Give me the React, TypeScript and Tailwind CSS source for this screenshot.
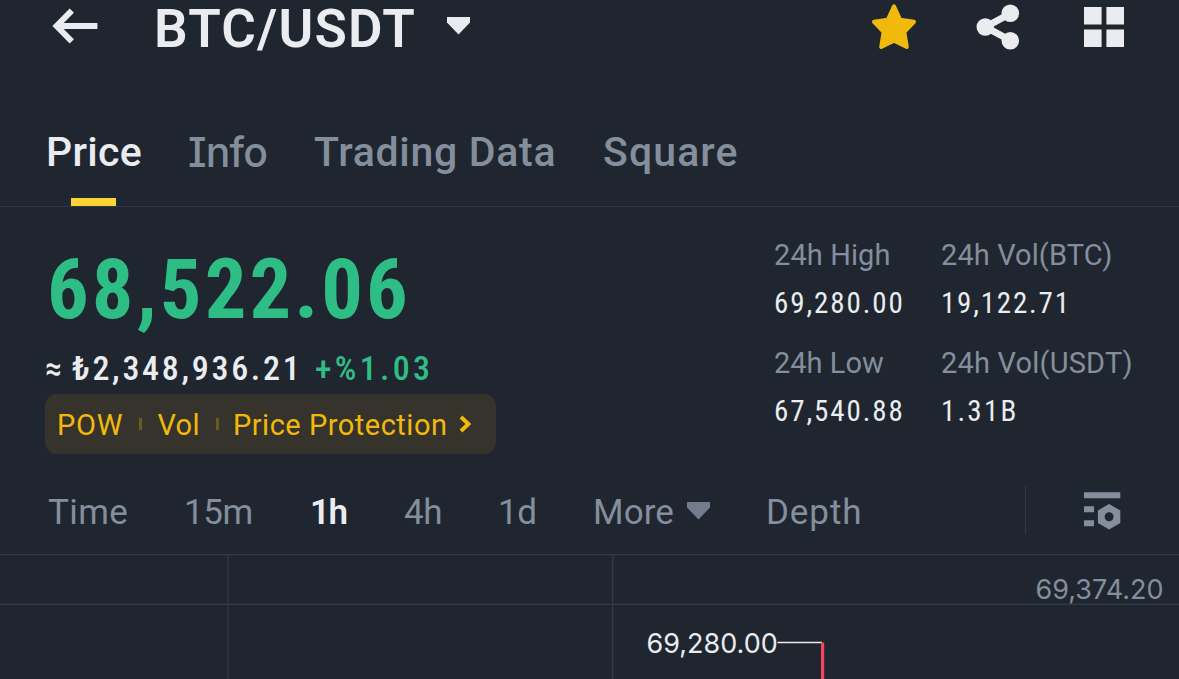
import clsx from "clsx"

interface TabProps {
  label: string
  active?: boolean
  className?: string
}

interface StatProps {
  label: string
  value: string
  labelClassName?: string
  valueClassName?: string
}

const TABS: TabProps[] = [
  { label: "Price", active: true, className: "w-[142px] tracking-[0.3px]" },
  {
    label: "Info",
    className:
      "w-[126px] font-[Inter] text-[40px] tracking-[-0.8px] [font-feature-settings:'cv08']",
  },
  { label: "Trading Data", className: "w-[289px] tracking-[0.7px]" },
  { label: "Square", className: "tracking-[1.1px]" },
]

const INTERVALS: TabProps[] = [
  { label: "Time", className: "w-[136px] tracking-[0.4px]" },
  { label: "15m", className: "w-[126px] tracking-[-0.4px]" },
  { label: "1h", active: true, className: "w-[94px] tracking-[-1.5px]" },
  { label: "4h", className: "w-[94px] tracking-[-0.5px]" },
  { label: "1d", className: "w-[95px] tracking-[-0.5px]" },
]

const ArrowLeft = () => (
  <svg width="46" height="36" viewBox="0 0 46 36" fill="none" stroke="#eaecef" strokeWidth="6">
    <path d="M19.8 2.6L4.6 18L19.8 33.4" />
    <path d="M5 18H45.4" />
  </svg>
)

const Caret = ({ className }: { className?: string }) => (
  <svg width="23" height="18" viewBox="0 0 23 18" fill="currentColor" className={className}>
    <path d="M0 0H23V5.5L11.5 17.6L0 5.5Z" />
  </svg>
)

const Star = () => (
  <svg width="46" height="48" viewBox="0 0 46 48" fill="#f0b90b" stroke="#f0b90b">
    <path
      d="M23 3.4L29.2 16.8L43 18.8L33.4 29L35.8 44L23 37.8L10.2 44L12.6 29L3 18.8L16.8 16.8Z"
      strokeWidth="4"
      strokeLinejoin="round"
    />
  </svg>
)

const Share = () => (
  <svg width="44" height="46" viewBox="0 0 44 46" fill="#eaecef">
    <path d="M34.5 9.5L9.5 23L34.5 36.5" fill="none" stroke="#eaecef" strokeWidth="7" />
    <circle cx="34.3" cy="9.3" r="8.8" />
    <circle cx="9.3" cy="23" r="8.8" />
    <circle cx="34.3" cy="36.8" r="8.8" />
  </svg>
)

const Grid = () => (
  <svg width="40" height="40" viewBox="0 0 40 40" fill="#eaecef">
    <path d="M0 0H17.6V17.4H0zM22.4 0H40V17.4H22.4zM0 22.4H17.6V40H0zM22.4 22.4H40V40H22.4z" />
  </svg>
)

const ChartSettings = () => (
  <svg width="37" height="38" viewBox="0 0 37 38" fill="#848e9c">
    <path d="M0 0.2H36.3V6.2H0zM0 14.2H10V20.2H0zM0 28.2H10V34.2H0z" />
    <path
      fillRule="evenodd"
      d="M25.1 12L36.3 18.4V31L25.1 37.4L13.9 31V18.4ZM25.1 20.2A4.5 4.5 0 1 0 25.1 29.2A4.5 4.5 0 1 0 25.1 20.2Z"
    />
  </svg>
)

const Tab = ({ label, active, className }: TabProps) => (
  <div
    className={clsx(
      "flex flex-col items-start text-[41px] leading-[48px] font-medium",
      active ? "text-[#eaecef]" : "text-[#848e9c]",
      className
    )}
  >
    <div className="flex flex-col items-center">
      <span>{label}</span>
      {active && <div className="mt-[22px] h-2 w-[45px] bg-[#fcd535]" />}
    </div>
  </div>
)

const Stat = ({ label, value, labelClassName, valueClassName }: StatProps) => (
  <div className="text-[29px] leading-[48px] whitespace-nowrap">
    <div className={clsx("text-[#848e9c]", labelClassName)}>{label}</div>
    <div className={clsx("text-[#eaecef] font-stretch-75%", valueClassName)}>{value}</div>
  </div>
)

const Chart = () => (
  <svg width="1179" height="125" viewBox="0 0 1179 125" className="block">
    <g stroke="#323944" strokeWidth="1.4">
      <path d="M0 0.5H1179" />
      <path d="M0 50.3H1179" />
      <path d="M228 0V125" />
      <path d="M612.7 0V125" />
    </g>
    <g fontFamily="Inter, sans-serif" fontSize="27">
      <text x="1035.5" y="45" fill="#848e9c">
        69,374.20
      </text>
      <text x="646.5" y="99" fill="#eaecef">
        69,280.00
      </text>
    </g>
    <path d="M777.5 88.6H822" stroke="#eaecef" strokeWidth="1.5" />
    <path d="M822.6 88.5V125" stroke="#f6465d" strokeWidth="3.2" />
  </svg>
)

export default function App() {
  return (
    <div className="w-[1179px] h-[679px] overflow-hidden bg-[#202630] font-[Roboto,sans-serif] text-[#eaecef]">
      <header className="flex h-14 items-center pl-[52px] pr-[55px]">
        <div className="-mt-1">
          <ArrowLeft />
        </div>
        <h1 className="mt-[2px] ml-[56px] w-[262px] text-[53px] leading-[56px] font-semibold tracking-[1.2px]">
          BTC/USDT
        </h1>
        <Caret className="-mt-[5px] ml-[31px] text-[#eaecef]" />
        <div className="-mt-[2px] ml-auto flex items-center">
          <Star />
          <div className="ml-[59px] mr-[64px]">
            <Share />
          </div>
          <Grid />
        </div>
      </header>

      <nav className="flex h-[151px] border-b border-[#323944] pt-[72px] pl-[46px]">
        {TABS.map((tab) => (
          <Tab key={tab.label} {...tab} />
        ))}
      </nav>

      <section className="flex h-[263px] justify-between pl-[45px] pr-[45px]">
        <div className="pt-[41px]">
          <div className="pl-[2px] text-[82.5px] leading-[84px] font-bold tracking-[3.1px] text-[#2ebd85] font-stretch-75%">
            68,522.06
          </div>
          <div className="mt-[14px] flex text-[34px] leading-[44px] font-medium font-stretch-75%">
            <span className="w-[27px]">≈</span>
            <span className="w-[243px] tracking-[2.7px]">₺2,348,936.21</span>
            <span className="tracking-[3.3px] text-[#2ebd85]">+%1.03</span>
          </div>
          <div className="mt-[4px] flex h-[60px] w-[451px] items-center rounded-xl bg-[#35332b] pl-[12px] text-[29px] text-[#f0b90b]">
            <span className="mt-[3px] tracking-[0.8px]">POW</span>
            <span className="ml-[16px] h-3 w-[3px] bg-[#6b5a20]" />
            <span className="mt-[3px] ml-[15px] tracking-[0.4px]">Vol</span>
            <span className="ml-[16px] h-3 w-[3px] bg-[#6b5a20]" />
            <span className="mt-[3px] ml-[14px] tracking-[0.5px]">Price Protection</span>
            <svg width="13" height="18" viewBox="0 0 13 18" fill="none" className="ml-[12px]">
              <path d="M2 2L9.4 9L2 16" stroke="#f0b90b" strokeWidth="4" />
            </svg>
          </div>
        </div>
        <div className="grid grid-cols-[167px_193px] content-start gap-y-3 pt-6">
          <Stat
            label="24h High"
            value="69,280.00"
            labelClassName="tracking-[0.1px]"
            valueClassName="tracking-[1.9px]"
          />
          <Stat
            label="24h Vol(BTC)"
            value="19,122.71"
            labelClassName="tracking-[0.1px]"
            valueClassName="tracking-[1.8px]"
          />
          <Stat label="24h Low" value="67,540.88" valueClassName="tracking-[1.9px]" />
          <Stat
            label="24h Vol(USDT)"
            value="1.31B"
            labelClassName="tracking-[0.2px]"
            valueClassName="tracking-[2.2px]"
          />
        </div>
      </section>

      <div className="flex h-[84px] items-center pl-[48px] pr-[58px] text-[35px]">
        <div className="mt-[2px] flex">
          {INTERVALS.map(({ label, active, className }) => (
            <span
              key={label}
              className={clsx(
                active ? "font-semibold text-[#eaecef]" : "text-[#848e9c]",
                className
              )}
            >
              {label}
            </span>
          ))}
          <div className="flex w-[173px] items-center text-[#848e9c]">
            <span className="tracking-[0.1px]">More</span>
            <Caret className="-mt-[4px] ml-[13px] text-[#737b8c]" />
          </div>
          <span className="tracking-[0.9px] text-[#848e9c]">Depth</span>
        </div>
        <div className="-mt-[4px] ml-auto mr-[58px] h-12 w-px bg-[#323944]" />
        <div className="-mt-[2px]">
          <ChartSettings />
        </div>
      </div>

      <Chart />
    </div>
  )
}
